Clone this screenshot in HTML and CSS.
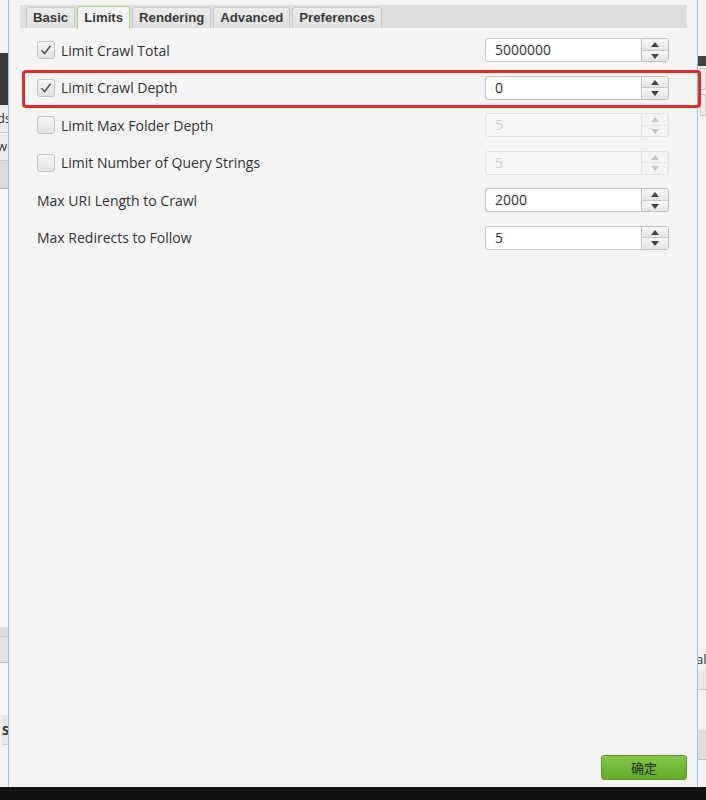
FILE: index.html
```html
<!DOCTYPE html>
<html>
<head>
<meta charset="utf-8">
<link rel="stylesheet" href="styles.css">
</head>
<body>
<div class="screen">
  <div class="side side-left">
    <div class="sl-top"></div>
    <div class="sl-dark"></div>
    <div class="sl-row">ds</div>
    <div class="sl-row">w</div>
    <div class="sl-btn"></div>
    <div class="sl-fill"></div>
    <div class="sl-line"></div>
    <div class="sl-btn2"></div>
    <div class="sl-fill2"></div>
    <div class="sl-row sl-s">S</div>
    <div class="sl-fill3"></div>
  </div>
  <div class="dialog">
    <div class="tabbar">
      <div class="tab">Basic</div>
      <div class="tab active">Limits</div>
      <div class="tab">Rendering</div>
      <div class="tab">Advanced</div>
      <div class="tab">Preferences</div>
    </div>
    <div class="form">
      <label class="lbl"><span class="cb checked"><svg viewBox="0 0 18 18" width="18" height="18"><path d="M4.5 9.2 L7.6 12.6 L13.6 4.8" fill="none" stroke="#555" stroke-width="1.6"/></svg></span>Limit Crawl Total</label>
      <div class="spin"><div class="field">5000000</div><div class="btns"><span class="up"></span><span class="down"></span></div></div>

      <label class="lbl"><span class="cb checked"><svg viewBox="0 0 18 18" width="18" height="18"><path d="M4.5 9.2 L7.6 12.6 L13.6 4.8" fill="none" stroke="#555" stroke-width="1.6"/></svg></span>Limit Crawl Depth</label>
      <div class="spin"><div class="field">0</div><div class="btns"><span class="up"></span><span class="down"></span></div></div>

      <label class="lbl"><span class="cb"></span>Limit Max Folder Depth</label>
      <div class="spin disabled"><div class="field">5</div><div class="btns"><span class="up"></span><span class="down"></span></div></div>

      <label class="lbl"><span class="cb"></span>Limit Number of Query Strings</label>
      <div class="spin disabled"><div class="field">5</div><div class="btns"><span class="up"></span><span class="down"></span></div></div>

      <label class="lbl">Max URI Length to Crawl</label>
      <div class="spin"><div class="field">2000</div><div class="btns"><span class="up"></span><span class="down"></span></div></div>

      <label class="lbl">Max Redirects to Follow</label>
      <div class="spin"><div class="field">5</div><div class="btns"><span class="up"></span><span class="down"></span></div></div>
    </div>
    <div class="footer">
      <button class="ok">确定</button>
    </div>
  </div>
  <div class="side side-right">
    <div class="sr-top"></div>
    <div class="sr-dark"></div>
    <div class="sr-box"></div>
    <div class="sr-box"></div>
    <div class="sr-fill"></div>
    <div class="sr-row">al:</div>
    <div class="sr-fill2"></div>
    <div class="sr-btn"></div>
    <div class="sr-fill3"></div>
  </div>
  <div class="highlight"></div>
</div>
<div class="taskbar"></div>
</body>
</html>
```
FILE: styles.css
```css
* { box-sizing: border-box; }
html, body { margin: 0; padding: 0; }
body {
  width: 706px;
  height: 800px;
  overflow: hidden;
  background: #111;
  font-family: "Open Sans", "Noto Sans", "Noto Sans CJK SC", sans-serif;
  color: #333;
}
.screen {
  position: relative;
  display: flex;
  height: 787px;
}
.side { width: 8px; flex: none; display: flex; flex-direction: column; background: #f2f2f2; overflow: hidden; font-size: 13px; font-weight: bold; color: #333; }
.sl-top { height: 53px; background: #f4f4f4; }
.sl-dark { height: 52px; background: #3a3a3a; }
.sl-row { height: 28px; line-height: 26px; background: #ececec; border-bottom: 1px solid #ccc; margin-left: -3px; font-weight: normal; font-size: 13px; }
.sl-btn { height: 28px; background: #dcdcdc; border-bottom: 1px solid #bbb; }
.sl-fill { height: 438px; background: #f6f6f6; }
.sl-line { height: 10px; background: #ddd; border-bottom: 1px solid #c8c8c8; }
.sl-btn2 { height: 26px; background: #e2e2e2; border-bottom: 1px solid #bbb; }
.sl-fill2 { height: 52px; background: #f6f6f6; }
.sl-s { background: #e6e6e6; height: 30px; line-height: 30px; margin-left: 2px; font-weight: bold; }
.sl-fill3 { flex: 1; background: #f4f4f4; }

.sr-top { height: 56px; background: #f4f4f4; }
.sr-dark { height: 10px; background: #444; }
.sr-box { height: 22px; background: #ececec; border: 1px solid #ccc; margin: 2px 0 2px 2px; }
.sr-fill { height: 530px; background: #f6f6f6; }
.sr-row { height: 22px; line-height: 22px; font-weight: normal; background: #efefef; margin-left: -2px; }
.sr-fill2 { height: 20px; background: #e8e8e8; border-bottom: 1px solid #ccc; }
.sr-btn { height: 30px; background: #dedede; border-bottom: 1px solid #bbb; margin-top: 40px; }
.sr-fill3 { flex: 1; background: #f4f4f4; }

.dialog {
  flex: 1;
  display: flex;
  flex-direction: column;
  background: #f4f4f4;
  border-left: 1px solid #9cc4e0;
  border-right: 1px solid #9cc4e0;
  padding: 5px 10px 7px 11px;
}
.tabbar {
  display: flex;
  gap: 2px;
  height: 23px;
  background: #dedede;
  padding: 2px 0 0 6px;
  align-items: flex-end;
}
.tab {
  height: 21px;
  padding: 0 6px;
  font-family: "Liberation Sans", Arial, sans-serif;
  font-weight: bold;
  font-size: 13.2px;
  line-height: 20px;
  color: #3a3a3a;
  background: linear-gradient(#ececec, #e0e0e0);
  border: 1px solid #c8c8c8;
  border-bottom: none;
  border-radius: 3px 3px 0 0;
}
.tab.active {
  height: 23px;
  margin-bottom: -1px;
  margin-top: -2px;
  background: #f4f4f4;
  border-color: #a6d67a;
  line-height: 22px;
}
.form {
  display: grid;
  grid-template-columns: 1fr 184px;
  grid-auto-rows: 24px;
  row-gap: 13.6px;
  padding: 10px 18px 0 17px;
  align-items: center;
}
.lbl {
  display: flex;
  align-items: center;
  gap: 6px;
  font-size: 14px;
  color: #333;
}
.cb {
  width: 18px;
  height: 18px;
  border: 1px solid #c4c4c4;
  border-radius: 3px;
  background: linear-gradient(#f6f6f6, #e2e2e2);
  display: flex;
  align-items: center;
  justify-content: center;
}
.cb svg { display: block; margin: -1px; }
.spin {
  display: flex;
  height: 24px;
}
.field {
  flex: 1;
  background: #fff;
  border: 1px solid #c6c6c6;
  border-right: none;
  border-radius: 3px 0 0 3px;
  font-size: 14px;
  line-height: 22px;
  padding-left: 9px;
  color: #333;
}
.btns {
  width: 28px;
  display: flex;
  flex-direction: column;
  border: 1px solid #c0c0c0;
  border-radius: 0 3px 3px 0;
  overflow: hidden;
}
.btns span {
  flex: 1;
  position: relative;
  background: linear-gradient(#f8f8f8, #e4e4e4);
}
.btns .down { border-top: 1px solid #c8c8c8; }
.btns span::after {
  content: "";
  position: absolute;
  left: 9px;
  top: 3px;
  border-left: 4.5px solid transparent;
  border-right: 4.5px solid transparent;
}
.btns .up::after { border-bottom: 5px solid #444; }
.btns .down::after { border-top: 5px solid #444; top: 3px; }
.spin.disabled .field { background: #f6f6f6; color: #cfcfcf; border-color: #e2e2e2; }
.spin.disabled .btns { border-color: #e2e2e2; }
.spin.disabled .btns span { background: #f4f4f4; }
.spin.disabled .btns .down { border-top-color: #e6e6e6; }
.spin.disabled .btns .up::after { border-bottom-color: #c8c8c8; }
.spin.disabled .btns .down::after { border-top-color: #c8c8c8; }

.footer {
  margin-top: auto;
  display: flex;
  justify-content: flex-end;
}
.ok {
  width: 86px;
  height: 25px;
  border: 1px solid #5a9a2c;
  border-radius: 3px;
  background: linear-gradient(#86c84a, #62ac2a);
  font-family: "Noto Sans CJK SC", sans-serif;
  font-size: 13px;
  color: #1f2a16;
  padding: 0;
}
.highlight {
  position: absolute;
  left: 22px;
  top: 70px;
  width: 679px;
  height: 38px;
  border: 3px solid #e42a28;
  border-radius: 4px;
}
.taskbar { height: 13px; background: #111; }
```
